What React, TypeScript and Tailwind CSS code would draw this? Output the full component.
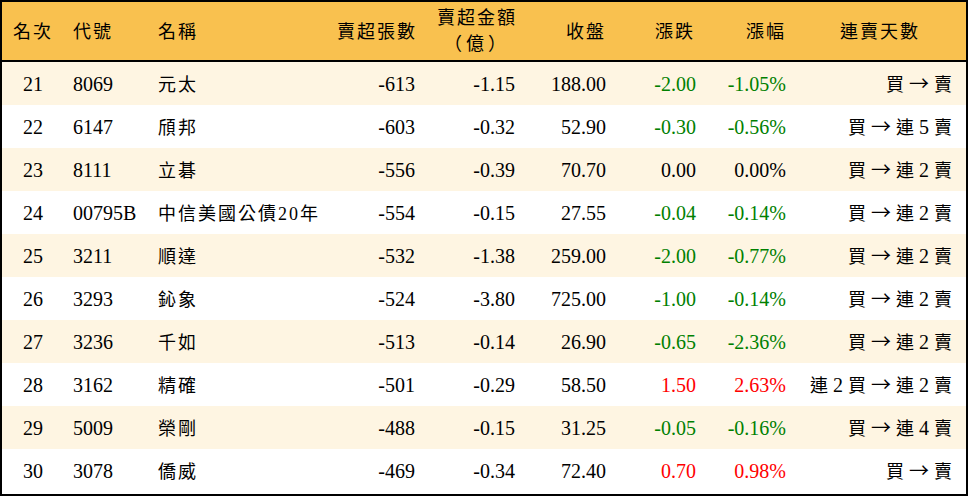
import { ReactNode } from 'react';

const rows = [
  ['21', '8069', '元太', '-613', '-1.15', '188.00', '-2.00', '-1.05%', '買 → 賣'],
  ['22', '6147', '頎邦', '-603', '-0.32', '52.90', '-0.30', '-0.56%', '買 → 連 5 賣'],
  ['23', '8111', '立碁', '-556', '-0.39', '70.70', '0.00', '0.00%', '買 → 連 2 賣'],
  ['24', '00795B', '中信美國公債20年', '-554', '-0.15', '27.55', '-0.04', '-0.14%', '買 → 連 2 賣'],
  ['25', '3211', '順達', '-532', '-1.38', '259.00', '-2.00', '-0.77%', '買 → 連 2 賣'],
  ['26', '3293', '鈊象', '-524', '-3.80', '725.00', '-1.00', '-0.14%', '買 → 連 2 賣'],
  ['27', '3236', '千如', '-513', '-0.14', '26.90', '-0.65', '-2.36%', '買 → 連 2 賣'],
  ['28', '3162', '精確', '-501', '-0.29', '58.50', '1.50', '2.63%', '連 2 買 → 連 2 賣'],
  ['29', '5009', '榮剛', '-488', '-0.15', '31.25', '-0.05', '-0.16%', '買 → 連 4 賣'],
  ['30', '3078', '僑威', '-469', '-0.34', '72.40', '0.70', '0.98%', '買 → 賣'],
];

const COLS = 'grid grid-cols-[62px_86px_150px_127px_100px_91px_90px_90px_1fr]';

// price change colour: red up, green down, black flat
const tone = (v: string) =>
  v.startsWith('-') ? 'text-[#008000]' : parseFloat(v) > 0 ? 'text-[#ff0000]' : 'text-black';

// CJK glyphs a bit smaller and spaced, like the Ming face in the original
const Cjk = ({ children }: { children: ReactNode }) => (
  <span className="text-[18px] tracking-[2px]">{children}</span>
);

// streak text: CJK chars small, arrow from the CJK font (full width)
const streak = (s: string) =>
  s.split(' ').map((t, i) => (
    <span key={i} className={i > 0 ? 'ml-[5px]' : ''}>
      {t === '→' ? (
        <span className="inline-block w-[20px] text-center" style={{ fontFamily: '"Noto Sans CJK TC", sans-serif' }}>
          →
        </span>
      ) : /\d/.test(t) ? (
        t
      ) : (
        <span className="text-[18px]">{t}</span>
      )}
    </span>
  ));

export default function App() {
  return (
    <div
      className="w-[968px] h-[496px] border-2 border-black bg-white text-black text-[20px]"
      style={{ fontFamily: '"Liberation Serif", "Noto Sans CJK TC", serif' }}
    >
      <div className={`${COLS} h-[60px] items-center bg-[#f9c14f] border-b-2 border-black`}>
        <div className="text-center"><Cjk>名次</Cjk></div>
        <div className="pl-[9px]"><Cjk>代號</Cjk></div>
        <div className="pl-[8px]"><Cjk>名稱</Cjk></div>
        <div className="text-right pr-[10px]"><Cjk>賣超張數</Cjk></div>
        <div className="pr-[10px] flex flex-col items-end leading-[26px]">
          <Cjk>賣超金額</Cjk>
          <span className="w-[80px] text-center text-[18px] tracking-[4px]">（億）</span>
        </div>
        <div className="text-right pr-[12px]"><Cjk>收盤</Cjk></div>
        <div className="text-right pr-[13px]"><Cjk>漲跌</Cjk></div>
        <div className="text-right pr-[12px]"><Cjk>漲幅</Cjk></div>
        <div className="text-center pr-[4px]"><Cjk>連賣天數</Cjk></div>
      </div>
      {rows.map((r, i) => (
        <div
          key={r[0]}
          className={`${COLS} h-[43px] items-center ${i % 2 === 0 ? 'bg-[#fef5e2]' : 'bg-white'}`}
        >
          <div className="text-center">{r[0]}</div>
          <div className="pl-[9px]">{r[1]}</div>
          <div className="pl-[8px] whitespace-nowrap"><Cjk>{r[2]}</Cjk></div>
          <div className="text-right pr-[12px]">{r[3]}</div>
          <div className="text-right pr-[12px]">{r[4]}</div>
          <div className="text-right pr-[12px]">{r[5]}</div>
          <div className={`text-right pr-[12px] ${tone(r[6])}`}>{r[6]}</div>
          <div className={`text-right pr-[12px] ${tone(r[7])}`}>{r[7]}</div>
          <div className="text-right pr-[14px] whitespace-nowrap">{streak(r[8])}</div>
        </div>
      ))}
    </div>
  );
}
